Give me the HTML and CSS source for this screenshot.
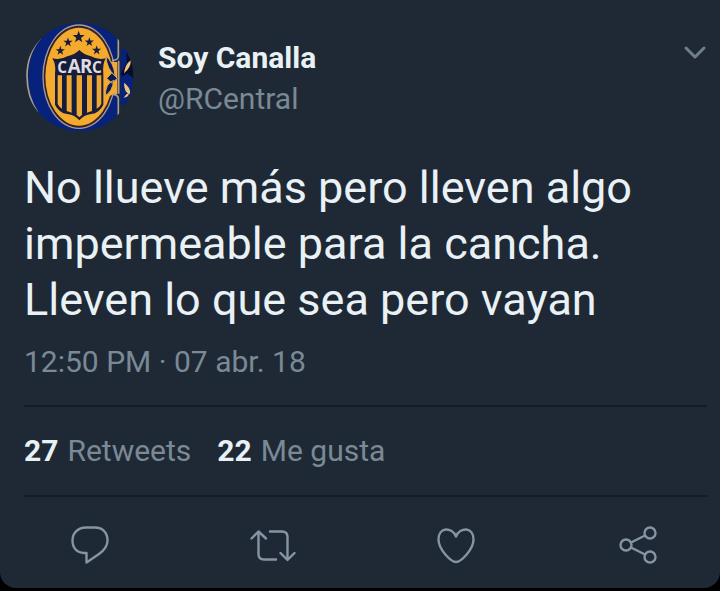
FILE: index.html
```html
<!DOCTYPE html>
<html lang="es">
<head>
    <meta charset="UTF-8">
    <meta name="viewport" content="width=device-width, initial-scale=1">
    <title>Soy Canalla</title>
    <link rel="stylesheet" href="styles.css">
</head>
<body>

    <article class="tweet">
        <header class="header">
            <svg class="avatar" viewBox="48 39 324 324" role="img" aria-label="Soy Canalla">
                <defs>
                    <clipPath id="circle"><circle cx="208" cy="201" r="162"/></clipPath>
                    <path id="star" d="M0-19 4.500-6H18L7 3l4 13L0 8l-11 8 4-13-11-9h13.500z"/>
                </defs>
                <g clip-path="url(#circle)">
                    <path d="M88 90L120 30H322V375H110L83 307Q55 260 55 196Q55 138 88 90z" fill="#06227c"/>
                    <path d="M92 84Q52 130 51 196Q51 262 84 309" fill="none" stroke="#aa9c93" stroke-width="5"/>
                    <path d="M340 110Q366 140 370 175L371 215Q366 255 340 290L332 278V130z" fill="#06227c"/>
                    <path d="M350 125L371 170V205L350 190L337 200L332 190L350 160z" fill="#080d28"/>
                    <path d="M342 190Q345 164 362 151Q364 172 342 190zM342 218Q364 234 360 252Q342 249 342 218zM341 263Q350 250 357 250Q355 263 341 263z" fill="#f0c27a"/>
                    <ellipse cx="207" cy="200" rx="110" ry="157" fill="#aa9c93"/>
                    <ellipse cx="207" cy="200" rx="106" ry="153" fill="#33212b"/>
                    <ellipse cx="207" cy="200" rx="101" ry="147" fill="#f4aa2c"/>
                    <path d="M286 150L310 156H322V253H308L282 270z" fill="#f4aa2c"/>
                    <path d="M288 139Q310 155 316 199Q290 177 288 139zM286 257Q286 220 311 211Q308 244 286 257zM290 205L306 188L322 205L306 220z" fill="#0b1a56" stroke="#d9a65b" stroke-width="3"/>
                    <path d="M325 85V138Q325 152 306 151M306 253Q325 253 325 267V316" fill="none" stroke="#aa9c93" stroke-width="5"/>
                    <path d="M326 152V251" stroke="#aa9c93" stroke-width="5"/>
                </g>
                <g fill="#171c3b">
                    <use href="#star" transform="translate(206 81)"/>
                    <use href="#star" transform="translate(174 97) scale(.76)"/>
                    <use href="#star" transform="translate(238 96) scale(.76)"/>
                    <use href="#star" transform="translate(151 122) scale(.76)"/>
                    <use href="#star" transform="translate(260 121) scale(.76)"/>
                    <path d="M127 145Q151 151 172 139Q194 134 208 120Q222 134 243 139Q265 151 287 145Q277 164 280 192V284Q268 309 244 312Q221 315 208 331Q195 315 172 312Q147 309 135 284V192Q139 164 127 145z"/>
                </g>
                <path d="M143 196H156V296Q148 292 143 282zM170 196H185V308L170 303zM200 196H216V315L208 322L200 315zM231 196H246V303L231 308zM260 196H274V282Q269 292 260 296z" fill="#eda933"/>
                <text class="crest-text" y="189"><tspan x="142" font-size="46">C</tspan><tspan x="173" font-size="56">A</tspan><tspan x="210" font-size="56">R</tspan><tspan x="246" font-size="46">C</tspan></text>
            </svg>
            <div class="author">
                <strong class="name">Soy Canalla</strong>
                <span class="handle">@RCentral</span>
            </div>
            <button class="more" type="button" aria-label="Más opciones">
                <svg width="24" height="16" viewBox="0 0 24 16"><path d="M3 3l9 9 9-9"/></svg>
            </button>
        </header>

        <p class="text">No llueve más pero lleven algo impermeable para la cancha. Lleven lo que sea pero vayan</p>
        <time class="date" datetime="2018-04-07T12:50">12:50 PM · 07 abr. 18</time>

        <div class="stats">
            <span class="stat"><strong>27</strong> Retweets</span>
            <span class="stat"><strong>22</strong> Me gusta</span>
        </div>

        <div class="actions">
            <button type="button" aria-label="Responder">
                <svg width="48" height="40" viewBox="0 0 48 40"><path d="M20 2.500H29C37 2.500 41.500 8 41.500 15.500C41.500 22 38 25.500 33 29L20.500 37.500V28H18C11 28 6.500 23 6.500 15.500C6.500 8 12 2.500 20 2.500z"/></svg>
            </button>
            <button type="button" aria-label="Retwittear">
                <svg width="48" height="40" viewBox="0 0 48 40"><path d="M2.500 13.500L9.500 6.500L17 13.500M9.500 7V29Q9.500 34.500 15 34.500H27M21 6.500H33Q38.500 6.500 38.500 12V34.500M31.500 28L38.500 35L45.500 28"/></svg>
            </button>
            <button type="button" aria-label="Me gusta">
                <svg width="48" height="40" viewBox="0 0 48 40"><path d="M24 11.500C20 2 6.500 1.500 6.500 14.500C6.500 25 19.500 37 24 37C28.500 37 41.500 25 41.500 14.500C41.500 1.500 28 2 24 11.500z"/></svg>
            </button>
            <button type="button" aria-label="Compartir">
                <svg width="48" height="40" viewBox="0 0 48 40"><circle cx="11" cy="20" r="5.500"/><circle cx="35" cy="8" r="5.500"/><circle cx="35" cy="32" r="5.500"/><path d="M16 17.500L30 10.500M16 22.500L30 29.500"/></svg>
            </button>
        </div>
    </article>

</body>
</html>
```

FILE: styles.css
```css
* {
    box-sizing: border-box;
}

body {
    margin: 0;
    background-color: #000;
    font-family: Roboto, "Liberation Sans", sans-serif;
}

.tweet {
    padding: 23px 13px 0 24px;
    border-radius: 0 0 16px 16px;
    background-color: #1e2935;
    color: #e9f1f5;
    font-size: 30px;
    line-height: 36px;
}

.header {
    display: flex;
    align-items: flex-start;
}

.avatar {
    width: 108px;
    height: 108px;
    margin-left: 2px;
}

.crest-text {
    fill: #dedde2;
    font-family: "Open Sans", sans-serif;
    font-weight: 700;
}

.author {
    display: flex;
    flex: 1;
    flex-direction: column;
    gap: 5px;
    margin: 17px 0 0 24px;
}

.name {
    font-weight: 700;
}

.handle,
.date,
.stats {
    color: #7b8996;
}

button {
    display: block;
    padding: 0;
    border: none;
    background: none;
    color: #8595a3;
    cursor: pointer;
}

button svg {
    display: block;
    fill: none;
    stroke: currentColor;
    stroke-width: 2.4;
    stroke-linecap: round;
    stroke-linejoin: round;
}

.more {
    margin-top: 22px;
    color: #6f7e8b;
}

.more svg {
    stroke-width: 3;
}

.text {
    margin: 29px 0 16px;
    padding-right: 48px;
    font-size: 45px;
    line-height: 56px;
}

.date {
    display: block;
}

.stats {
    display: flex;
    gap: 26px;
    margin-top: 25px;
    padding: 26px 0;
    border-top: 2px solid #121b26;
    border-bottom: 2px solid #121b26;
}

.stat {
    display: flex;
    gap: 9px;
}

.stats strong {
    color: #e9f1f5;
}

.actions {
    display: flex;
    justify-content: space-between;
    padding: 28px 44px 23px 42px;
}
```
